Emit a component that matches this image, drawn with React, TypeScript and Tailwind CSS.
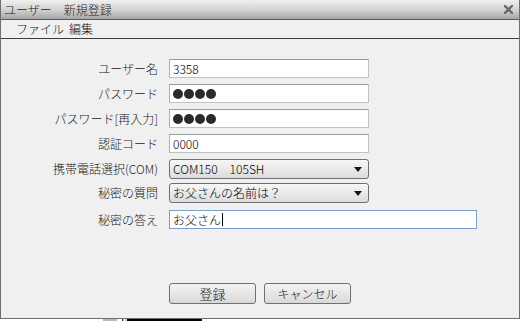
import React from "react";

const FONT = '"MS UI Gothic", "Noto Sans CJK JP", "Liberation Sans", sans-serif';

function Label({ children }: { children: React.ReactNode }) {
  return (
    <div className="w-[158px] shrink-0 text-right text-[12px] leading-none text-[#1a1a1a] pr-[1px] font-light">
      {children}
    </div>
  );
}

function TextBox({ children, w = "w-[200px]", focused = false }: { children?: React.ReactNode; w?: string; focused?: boolean }) {
  return (
    <div
      className={`${w} h-[19px] ml-[10px] bg-white border flex items-center pl-[3px] text-[12px] leading-none text-black font-light ${
        focused ? "border-[#7c9fc9]" : "border-[#c2c2c2] border-t-[#9a9a9a] border-l-[#b0b0b0]"
      }`}
    >
      {children}
    </div>
  );
}

function Select({ children }: { children: React.ReactNode }) {
  return (
    <div className="w-[200px] h-[20px] ml-[10px] rounded-[3px] border border-[#707070] bg-gradient-to-b from-[#f7f7f7] to-[#dcdcdc] flex items-center justify-between pl-[3px] pr-[6px] text-[12px] leading-none text-black font-light">
      <span>{children}</span>
      <svg width="8" height="5" viewBox="0 0 8 5">
        <path d="M0 0 H8 L4 5 Z" fill="#111" />
      </svg>
    </div>
  );
}

function Dots() {
  return (
    <div className="flex gap-[1px]">
      {[0, 1, 2, 3].map((i) => (
        <span key={i} className="w-[10px] h-[10px] rounded-full bg-[#2a2a2a] inline-block" />
      ))}
    </div>
  );
}

export default function App() {
  return (
    <div className="w-[520px] h-[321px] bg-white overflow-hidden" style={{ fontFamily: FONT }}>
      <div className="h-[319px] flex flex-col bg-[#f0f0f0] border-l border-r border-b border-[#6f6f6f]">
        {/* Title bar */}
        <div className="h-[20px] shrink-0 bg-gradient-to-b from-[#f0f0f0] via-[#d4d4d4] to-[#a6a6a6] border-b border-[#5c5c5c] flex items-center justify-between pl-[3px] pr-[6px]">
          <span className="text-[12px] leading-none text-[#1c1c1c] font-light">ユーザー　新規登録</span>
          <svg width="9" height="9" viewBox="0 0 9 9" className="mb-[1px]">
            <path d="M1 1 L8 8 M8 1 L1 8" stroke="#6a6a6a" strokeWidth="2.4" strokeLinecap="square" />
          </svg>
        </div>
        {/* Menu bar */}
        <div className="h-[19px] shrink-0 bg-[#f0f0f0] border-b border-[#3c3c3c] flex items-center pl-[15px] text-[12px] leading-none text-[#111] font-light">
          <span>ファイル</span>
          <span className="ml-[5px]">編集</span>
        </div>
        {/* Form */}
        <div className="flex-1 flex flex-col pt-[20px]">
          <div className="flex items-center">
            <Label>ユーザー名</Label>
            <TextBox>3358</TextBox>
          </div>
          <div className="flex items-center mt-[6px]">
            <Label>パスワード</Label>
            <TextBox>
              <Dots />
            </TextBox>
          </div>
          <div className="flex items-center mt-[6px]">
            <Label>パスワード[再入力]</Label>
            <TextBox>
              <Dots />
            </TextBox>
          </div>
          <div className="flex items-center mt-[6px]">
            <Label>認証コード</Label>
            <TextBox>0000</TextBox>
          </div>
          <div className="flex items-center mt-[6px]">
            <Label>携帯電話選択(COM)</Label>
            <Select>COM150　105SH</Select>
          </div>
          <div className="flex items-center mt-[4px]">
            <Label>秘密の質問</Label>
            <Select>お父さんの名前は？</Select>
          </div>
          <div className="flex items-center mt-[7px]">
            <Label>秘密の答え</Label>
            <TextBox w="w-[308px]" focused>
              <span>お父さん</span>
              <span className="w-[1px] h-[13px] bg-black ml-[1px]" />
            </TextBox>
          </div>
          <div className="flex justify-center gap-[8px] mt-[54px]">
            <button className="w-[87px] h-[21px] rounded-[3px] border border-[#707070] bg-gradient-to-b from-[#f4f4f4] to-[#d9d9d9] text-[13px] leading-none text-[#1a1a1a] font-light">
              登録
            </button>
            <button className="w-[87px] h-[21px] rounded-[3px] border border-[#707070] bg-gradient-to-b from-[#f4f4f4] to-[#d9d9d9] text-[12px] leading-none text-[#1a1a1a] font-light">
              キャンセル
            </button>
          </div>
        </div>
      </div>
      {/* window behind */}
      <div className="h-[2px] flex">
        <div className="w-[103px]" />
        <div className="w-[14px] bg-[#b8b8b8]" />
        <div className="w-[5px]" />
        <div className="w-[1px] bg-[#333]" />
        <div className="w-[4px] bg-[#ddd]" />
        <div className="w-[75px] bg-black" />
      </div>
    </div>
  );
}
